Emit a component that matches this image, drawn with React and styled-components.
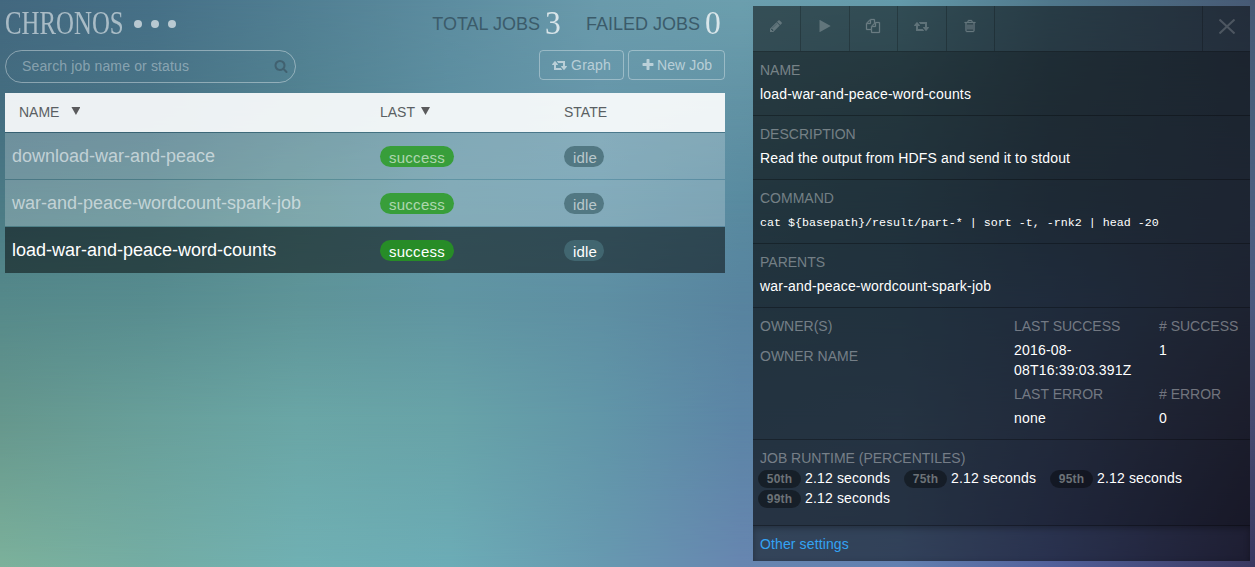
import React from "react";
import styled, { createGlobalStyle } from "styled-components";

const Global = createGlobalStyle`
  * { box-sizing: border-box; }
  html, body { margin: 0; padding: 0; }
  body {
    font-family: "Liberation Sans", Arial, sans-serif;
    font-size: 14px;
    line-height: 20px;
    color: #fff;
    overflow: hidden;
  }
`;

/* Backdrop colours: each band is a horizontal gradient at a height of the page. */
const columns = [0, 150, 300, 450, 600, 740, 900, 1050, 1255];
const bands = [
  { y: 0, c: ["#43687f", "#467087", "#517f93", "#5d8da0", "#6a9bac", "#6c9fae", "#649aaa", "#50788c", "#475a75"] },
  { y: 100, c: ["#446d80", "#487386", "#528291", "#5d8fa1", "#6797aa", "#6293a5", "#5b8a9c", "#4f7086", "#495f7b"] },
  { y: 200, c: ["#4b7a85", "#4f8088", "#5a8f95", "#6195a5", "#6094a8", "#598ba0", "#54809a", "#4c6b88", "#4c5f80"] },
  { y: 300, c: ["#55898a", "#578c8f", "#5e9498", "#6095a2", "#5e8fa3", "#58849f", "#567fa0", "#51709a", "#4c5a7e"] },
  { y: 420, c: ["#66978d", "#689f9a", "#6aa6a6", "#68a3a8", "#6196a8", "#5c85a6", "#5f83a9", "#566c98", "#474b70"] },
  { y: 567, c: ["#7cb19b", "#74ada4", "#70b0b3", "#6cacb6", "#6799b0", "#6786b0", "#6280b0", "#51609a", "#393860"] },
];

const Page = styled.main`
  position: relative;
  isolation: isolate;
  display: flex;
  justify-content: space-between;
  width: 1255px;
  height: 567px;
  padding: 6px 5px;
`;
const Band = styled.div`
  position: absolute;
  inset: 0;
  z-index: -1;
  background: linear-gradient(to right, ${(p) => p.$colors.map((c, i) => `${c} ${columns[i]}px`).join(", ")});
  ${(p) => p.$to > 0 && `mask-image: linear-gradient(to bottom, transparent ${p.$from}px, #000 ${p.$to}px);`}
`;

const Jobs = styled.section`
  width: 720px;
`;
const TitleRow = styled.header`
  display: flex;
  justify-content: space-between;
  height: 44px;
`;
const Brand = styled.div`
  display: flex;
  height: 34px;
  align-items: center;
`;
const Logo = styled.h1`
  width: 118px;
  margin: 0;
  font: 400 34px/34px "Liberation Serif", serif;
  color: rgba(255, 255, 255, 0.54);
  white-space: nowrap;
  transform: scaleX(0.73);
  transform-origin: 0 0;
`;
const Dots = styled.div`
  display: flex;
  gap: 9px;
  margin: 2px 0 0 11px;
  i {
    width: 8px;
    height: 8px;
    border-radius: 50%;
    background: rgba(255, 255, 255, 0.62);
  }
`;
const Stats = styled.div`
  display: flex;
  gap: 25px;
  padding-right: 4px;
`;
const Stat = styled.div`
  display: flex;
  gap: 5px;
  height: 34px;
  font-size: 18px;
  line-height: 36px;
  color: #3b5b6a;
`;
const Count = styled.b`
  width: 16px;
  font: 400 34px/34px "Liberation Serif", serif;
  color: rgba(255, 255, 255, 0.75);
  transform: scaleX(0.93);
  transform-origin: 0 0;
`;
const Controls = styled.div`
  display: flex;
  gap: 4px;
  height: 43px;
  align-items: flex-start;
`;
const Search = styled.label`
  display: flex;
  align-items: center;
  justify-content: space-between;
  width: 291px;
  height: 33px;
  margin-right: auto;
  padding: 0 7px 2px 16px;
  border: 1px solid rgba(255, 255, 255, 0.38);
  border-radius: 17px;
  color: rgba(255, 255, 255, 0.37);
  letter-spacing: 0.15px;
`;
const SearchIcon = styled.span`
  display: flex;
  padding-top: 1px;
  color: #416170;
`;
const Button = styled.button`
  display: flex;
  align-items: center;
  gap: ${(p) => p.$gap}px;
  width: ${(p) => p.$width}px;
  height: 30px;
  padding: 0 0 0 12px;
  border: 1px solid rgba(255, 255, 255, 0.34);
  border-radius: 4px;
  background: none;
  color: rgba(255, 255, 255, 0.55);
  font: inherit;
  letter-spacing: ${(p) => p.$spacing || 0}px;
  svg { flex: none; }
`;
const Table = styled.div`
  display: flex;
  flex-direction: column;
`;
const Row = styled.div`
  display: grid;
  grid-template-columns: 368px 184px 1fr;
  align-items: center;
  height: 47px;
  padding: 0 7px;
  border-bottom: 1px solid transparent;
  background: ${(p) => (p.$selected ? "rgba(0,0,0,.49)" : "rgba(255,255,255,.22)")} padding-box;
  color: ${(p) => (p.$selected ? "#fff" : "rgba(255,255,255,.58)")};
  font-size: 18px;
`;
const HeadRow = styled(Row)`
  height: 40px;
  padding-bottom: 2px;
  background: rgba(255, 255, 255, 0.9) padding-box;
  border-bottom-color: rgba(20, 55, 75, 0.3);
  color: #5a5f63;
  font-size: 14px;
`;
const HeadCell = styled.span`
  display: flex;
  align-items: center;
  gap: ${(p) => p.$gap || 0}px;
  padding-left: ${(p) => p.$indent || 0}px;
`;
const Arrow = styled.span`
  width: 9px;
  height: 8px;
  margin-top: -1px;
  background: #5a5a5c;
  clip-path: polygon(0 0, 100% 0, 50% 100%);
`;
const Pill = styled.span`
  display: inline-block;
  justify-self: start;
  width: ${(p) => (p.$green ? 74 : 40)}px;
  height: 21px;
  padding: 0 9px;
  border-radius: 11px;
  background: ${(p) => (p.$green ? (p.$selected ? "#278c27" : "#389e3a") : p.$selected ? "#416670" : "#527883")};
  color: ${(p) => (p.$selected ? "#fff" : "rgba(255,255,255,.6)")};
  font-size: 15px;
  line-height: 23px;
  letter-spacing: ${(p) => (p.$green ? 0.26 : 0.2)}px;
`;

const Detail = styled.aside`
  display: flex;
  flex-direction: column;
  width: 497px;
  height: 555px;
`;
const Toolbar = styled.nav`
  display: flex;
  flex: none;
  height: 46px;
  background: rgba(0, 0, 0, 0.5);
  border-bottom: 1px solid rgba(0, 0, 0, 0.35);
`;
const Tool = styled.span`
  display: flex;
  align-items: center;
  justify-content: center;
  width: ${(p) => p.$width}px;
  padding: 0 1px 5px 0;
  ${(p) => (p.$last ? "margin-left: auto; padding-right: 0; border-left" : "border-right")}: 1px solid rgba(0, 0, 0, 0.22);
  color: rgba(255, 255, 255, ${(p) => (p.$last ? 0.19 : 0.23)});
`;
const Section = styled.section`
  flex: none;
  height: ${(p) => p.$height || 64}px;
  padding: 8px 7px 0;
  background: rgba(0, 0, 0, 0.61);
  border-bottom: 1px solid rgba(0, 0, 0, 0.3);
`;
const Label = styled.div`
  color: rgba(255, 255, 255, 0.38);
  margin-bottom: ${(p) => p.$gap ?? 4}px;
`;
const Value = styled.div`
  min-height: 20px;
  letter-spacing: ${(p) => p.$spacing ?? 0.19}px;
`;
const Command = styled.code`
  display: block;
  padding-top: 1px;
  font-family: "Liberation Mono", monospace;
  font-size: 11.666px;
  white-space: nowrap;
`;
const OwnerGrid = styled.div`
  display: grid;
  grid-template-columns: 254px 145px 1fr;
  white-space: nowrap;
`;
const Stack = styled.div`
  ${Value} { white-space: pre-line; margin-bottom: 4px; }
`;
const Percentiles = styled.div`
  display: flex;
  flex-wrap: wrap;
  column-gap: 14px;
  margin-left: -2px;
`;
const Percentile = styled.span`
  display: flex;
  align-items: center;
  gap: 4px;
  width: 132px;
  height: 20px;
  letter-spacing: 0.15px;
  white-space: nowrap;
`;
const Badge = styled.b`
  flex: none;
  width: 43px;
  height: 18px;
  margin-top: 1px;
  border-radius: 9px;
  background: rgba(0, 0, 0, 0.38);
  color: #6c7277;
  font-size: 12px;
  line-height: 18px;
  text-align: center;
`;
const Footer = styled.footer`
  flex: 1;
  padding: 8px 7px 0;
  background: rgba(0, 0, 0, 0.49);
  box-shadow: inset 0 2px 6px rgba(0, 0, 0, 0.3);
  color: #33a3f4;
  letter-spacing: 0.12px;
`;

const paths = {
  pencil: "M491 1536l91-91-235-235-91 91v107h128v128h107zm523-928q0-22-22-22-10 0-17 7l-542 542q-7 7-7 17 0 22 22 22 10 0 17-7l542-542q7-7 7-17zm-54-192l416 416-832 832h-416v-416zm683 96q0 53-37 90l-166 166-416-416 166-165q36-38 90-38 53 0 91 38l235 234q37 39 37 91z",
  play: "M1576 927l-1328 738q-23 13-39.5 3t-16.5-36v-1472q0-26 16.5-36t39.5 3l1328 738q23 13 23 31t-23 31z",
  copy: "M1696 384q40 0 68 28t28 68v1216q0 40-28 68t-68 28h-960q-40 0-68-28t-28-68v-288h-544q-40 0-68-28t-28-68v-672q0-40 20-88t48-76l408-408q28-28 76-48t88-20h416q40 0 68 28t28 68v328q68-40 128-40h416zm-544 213l-299 299h299v-299zm-640-384l-299 299h299v-299zm196 647l316-316v-416h-384v416q0 40-28 68t-68 28h-416v640h512v-256q0-40 20-88t48-76zm956 804v-1152h-384v416q0 40-28 68t-68 28h-416v640h896z",
  retweet: "M1280 1504q0 13-9.5 22.5t-22.5 9.5h-960q-8 0-13.5-2t-9-7-5.5-8-3-11.5-1-11.5v-600h-192q-26 0-45-19t-19-45q0-24 15-41l320-384q19-22 49-22t49 22l320 384q15 17 15 41 0 26-19 45t-45 19h-192v384h576q16 0 25 11l160 192q7 10 7 21zm640-416q0 24-15 41l-320 384q-20 23-49 23t-49-23l-320-384q-15-17-15-41 0-26 19-45t45-19h192v-384h-576q-16 0-25-12l-160-192q-7-9-7-20 0-13 9.5-22.5t22.5-9.5h960q8 0 13.5 2t9 7 5.5 8 3 11.5 1 11.5v600h192q26 0 45 19t19 45z",
  trash: "M704 736v576q0 14-9 23t-23 9h-64q-14 0-23-9t-9-23v-576q0-14 9-23t23-9h64q14 0 23 9t9 23zm256 0v576q0 14-9 23t-23 9h-64q-14 0-23-9t-9-23v-576q0-14 9-23t23-9h64q14 0 23 9t9 23zm256 0v576q0 14-9 23t-23 9h-64q-14 0-23-9t-9-23v-576q0-14 9-23t23-9h64q14 0 23 9t9 23zm128 724v-948h-896v948q0 22 7 40.5t14.5 27 10.5 8.5h832q3 0 10.5-8.5t14.5-27 7-40.5zm-672-1076h448l-48-117q-7-9-17-11h-317q-10 2-17 11zm928 32v64q0 14-9 23t-23 9h-96v948q0 83-47 143.5t-113 60.5h-832q-66 0-113-58.5t-47-141.5v-952h-96q-14 0-23-9t-9-23v-64q0-14 9-23t23-9h309l70-167q15-37 54-63t79-26h320q40 0 79 26t54 63l70 167h309q14 0 23 9t9 23z",
  plus: "M1600 736v192q0 40-28 68t-68 28h-416v416q0 40-28 68t-68 28h-192q-40 0-68-28t-28-68v-416h-416q-40 0-68-28t-28-68v-192q0-40 28-68t68-28h416v-416q0-40 28-68t68-28h192q40 0 68 28t28 68v416h416q40 0 68 28t28 68z",
  search: "M1216 832q0-185-131.5-316.5t-316.5-131.5-316.5 131.5-131.5 316.5 131.5 316.5 316.5 131.5 316.5-131.5 131.5-316.5zm512 832q0 52-38 90t-90 38q-54 0-90-38l-343-342q-179 124-399 124-143 0-273.5-55.5t-225-150-150-225-55.5-273.5 55.5-273.5 150-225 225-150 273.5-55.5 273.5 55.5 225 150 150 225 55.5 273.5q0 220-124 399l343 343q37 37 37 90z",
};

function Icon({ name, size = 14 }) {
  const box = name === "retweet" ? 1920 : 1792;
  const bold = name === "trash" || name === "copy";
  return (
    <svg width={(size * box) / 1792} height={size} viewBox={`0 0 ${box} 1792`} fill="currentColor" overflow="visible">
      <path d={paths[name]} stroke="currentColor" strokeWidth={bold ? 40 : 0} />
    </svg>
  );
}

const jobs = ["download-war-and-peace", "war-and-peace-wordcount-spark-job", "load-war-and-peace-word-counts"];
const tools = [["pencil", 48], ["play", 49], ["copy", 48], ["retweet", 49], ["trash", 48]];

export default function App() {
  return (
    <Page>
      <Global />
      {bands.map((b, i) => (
        <Band key={b.y} $colors={b.c} $from={i ? bands[i - 1].y : 0} $to={b.y} />
      ))}
      <Jobs>
        <TitleRow>
          <Brand>
            <Logo>CHRONOS</Logo>
            <Dots><i /><i /><i /></Dots>
          </Brand>
          <Stats>
            <Stat>TOTAL JOBS<Count>3</Count></Stat>
            <Stat>FAILED JOBS<Count>0</Count></Stat>
          </Stats>
        </TitleRow>
        <Controls>
          <Search>Search job name or status<SearchIcon><Icon name="search" /></SearchIcon></Search>
          <Button $width={85} $gap={4} $spacing={0.25}><Icon name="retweet" />Graph</Button>
          <Button $width={97} $gap={2} $spacing={0.1}><Icon name="plus" />New Job</Button>
        </Controls>
        <Table>
          <HeadRow>
            <HeadCell $gap={12} $indent={7}>NAME<Arrow /></HeadCell>
            <HeadCell $gap={6}>LAST<Arrow /></HeadCell>
            <HeadCell>STATE</HeadCell>
          </HeadRow>
          {jobs.map((job, i) => (
            <Row key={job} $selected={i === 2}>
              <span>{job}</span>
              <Pill $green $selected={i === 2}>success</Pill>
              <Pill $selected={i === 2}>idle</Pill>
            </Row>
          ))}
        </Table>
      </Jobs>
      <Detail>
        <Toolbar>
          {tools.map(([name, width]) => (
            <Tool key={name} $width={width}><Icon name={name} /></Tool>
          ))}
          <Tool $width={48} $last>
            <svg width="16" height="15" viewBox="0 0 16 15" fill="none" stroke="currentColor" strokeWidth="2">
              <path d="M.5.5l15 14M15.5.5l-15 14" />
            </svg>
          </Tool>
        </Toolbar>
        <Section><Label>NAME</Label><Value>load-war-and-peace-word-counts</Value></Section>
        <Section><Label>DESCRIPTION</Label><Value $spacing={0.14}>Read the output from HDFS and send it to stdout</Value></Section>
        <Section>
          <Label>COMMAND</Label>
          <Command>{"cat ${basepath}/result/part-* | sort -t, -rnk2 | head -20"}</Command>
        </Section>
        <Section><Label>PARENTS</Label><Value>war-and-peace-wordcount-spark-job</Value></Section>
        <Section $height={132}>
          <OwnerGrid>
            <Stack><Label $gap={10}>OWNER(S)</Label><Label>OWNER NAME</Label></Stack>
            <Stack>
              <Label>LAST SUCCESS</Label><Value>{"2016-08-\n08T16:39:03.391Z"}</Value>
              <Label>LAST ERROR</Label><Value>none</Value>
            </Stack>
            <Stack>
              <Label># SUCCESS</Label><Value>{"1\n\u00a0"}</Value>
              <Label># ERROR</Label><Value>0</Value>
            </Stack>
          </OwnerGrid>
        </Section>
        <Section $height={86}>
          <Label $gap={0}>JOB RUNTIME (PERCENTILES)</Label>
          <Percentiles>
            {["50th", "75th", "95th", "99th"].map((p) => (
              <Percentile key={p}><Badge>{p}</Badge>2.12 seconds</Percentile>
            ))}
          </Percentiles>
        </Section>
        <Footer>Other settings</Footer>
      </Detail>
    </Page>
  );
}
